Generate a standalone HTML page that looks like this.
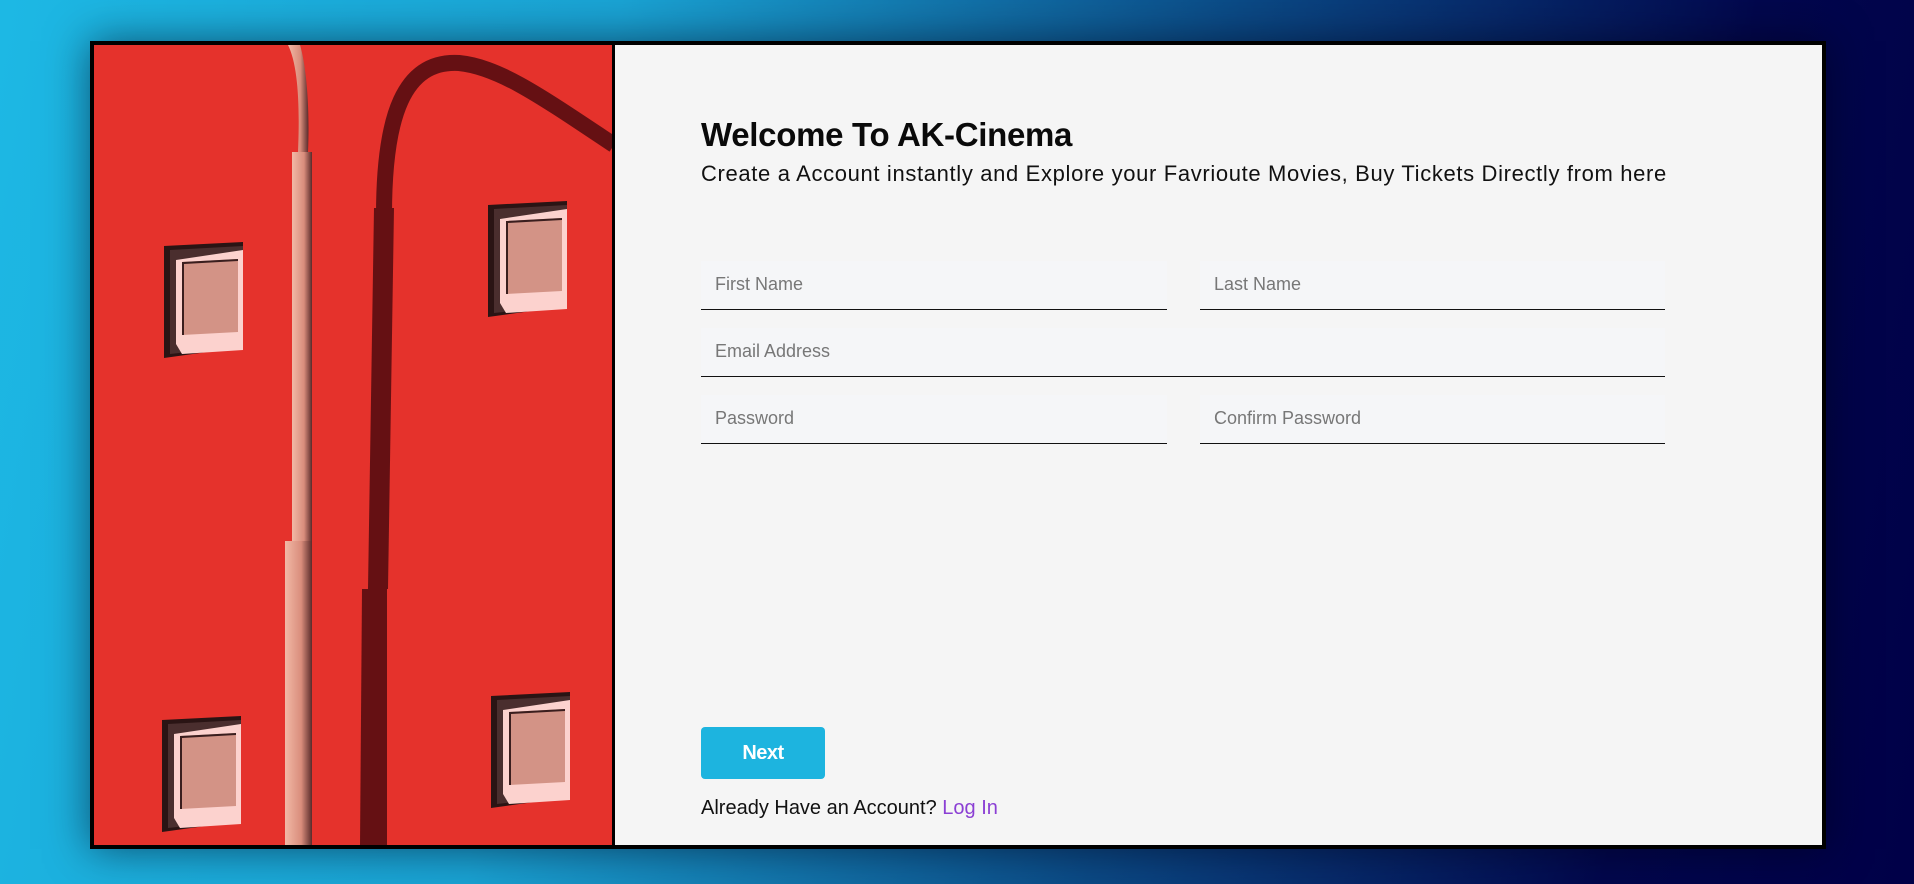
<!DOCTYPE html>
<html><head><meta charset="utf-8"><style>
html,body{margin:0;padding:0;width:1914px;height:884px;overflow:hidden}
body{background:linear-gradient(100deg,#1db8e4 0%,#1aa3d4 30%,#0b4a86 60%,#02074d 85%,#000048 100%);font-family:"Liberation Sans",sans-serif;position:relative}
.box{position:absolute;left:90px;top:41px;width:1728px;height:800px;border:4px solid #000;background:#f5f5f5;box-shadow:0 0 40px rgba(0,0,20,.55)}
.left{position:absolute;left:0;top:0;width:518px;height:800px;background:#e5322c;overflow:hidden}
.div{position:absolute;left:518px;top:0;width:3px;height:800px;background:#000}
h1{position:absolute;left:607px;top:71px;margin:0;font-size:33px;font-weight:bold;color:#0a0a0a;letter-spacing:-0.3px}
.sub{position:absolute;left:607px;top:116px;font-size:22px;color:#111;letter-spacing:0.65px;white-space:nowrap}
.in{position:absolute;background:#f5f6f8;border-bottom:1.5px solid #111;height:49px;box-sizing:border-box}
.in span{position:absolute;left:14px;top:13px;font-size:18px;color:#777}
.btn{position:absolute;left:607px;top:682px;width:124px;height:52px;background:#1db4df;border-radius:4px;color:#fff;font-weight:bold;font-size:20px;text-align:center;line-height:52px;letter-spacing:-0.5px}
.foot{position:absolute;left:607px;top:752px;font-size:20px;color:#111;white-space:nowrap}
.foot a{color:#8b3fd4;text-decoration:none}
</style></head><body>
<div class="box">
<div class="left">
<svg width="518" height="800" viewBox="0 0 518 800">
<defs>
<linearGradient id="lp" x1="0" x2="1" y1="0" y2="0"><stop offset="0" stop-color="#f2b9a6"/><stop offset="0.6" stop-color="#d98d7c"/><stop offset="1" stop-color="#5a2b2b"/></linearGradient>
<g id="w">
<polygon points="0,4 79,0 79,105 0,116" fill="#2a1414"/>
<polygon points="6,8 79,4 79,104 6,112" fill="#4a2e2e"/>
<polygon points="12,18 79,8 79,108 18,112 12,102" fill="#fcd2ce"/>
<polygon points="18,20 74,17 74,90 18,93" fill="#d39386"/>
<polygon points="18,20 74,17 74,19 20,22 20,93 18,93" fill="#3a1e1e"/>
</g>
</defs>
<path d="M194,0 C204,20 206,60 204,107 L214,107 C216,60 212,20 206,0 Z" fill="url(#lp)"/>
<rect x="198" y="107" width="20" height="389" fill="url(#lp)"/>
<rect x="191" y="496" width="27" height="304" fill="url(#lp)"/>
<path d="M290,170 C290,70 310,15 365,18 C405,22 445,50 520,100" fill="none" stroke="#651013" stroke-width="16"/>
<polygon points="280,163 300,163 294,544 274,544" fill="#651013"/>
<polygon points="268,544 293,544 293,800 266,800" fill="#651013"/>
<use href="#w" x="70" y="197"/>
<use href="#w" x="394" y="156"/>
<use href="#w" x="68" y="671"/>
<use href="#w" x="397" y="647"/>
</svg>
</div>
<div class="div"></div>
<h1>Welcome To AK-Cinema</h1>
<div class="sub">Create a Account instantly and Explore your Favrioute Movies, Buy Tickets Directly from here</div>
<div class="in" style="left:607px;top:216px;width:466px"><span>First Name</span></div>
<div class="in" style="left:1106px;top:216px;width:465px"><span>Last Name</span></div>
<div class="in" style="left:607px;top:283px;width:964px"><span>Email Address</span></div>
<div class="in" style="left:607px;top:350px;width:466px"><span>Password</span></div>
<div class="in" style="left:1106px;top:350px;width:465px"><span>Confirm Password</span></div>
<div class="btn">Next</div>
<div class="foot">Already Have an Account? <a>Log In</a></div>
</div>
</body></html>
